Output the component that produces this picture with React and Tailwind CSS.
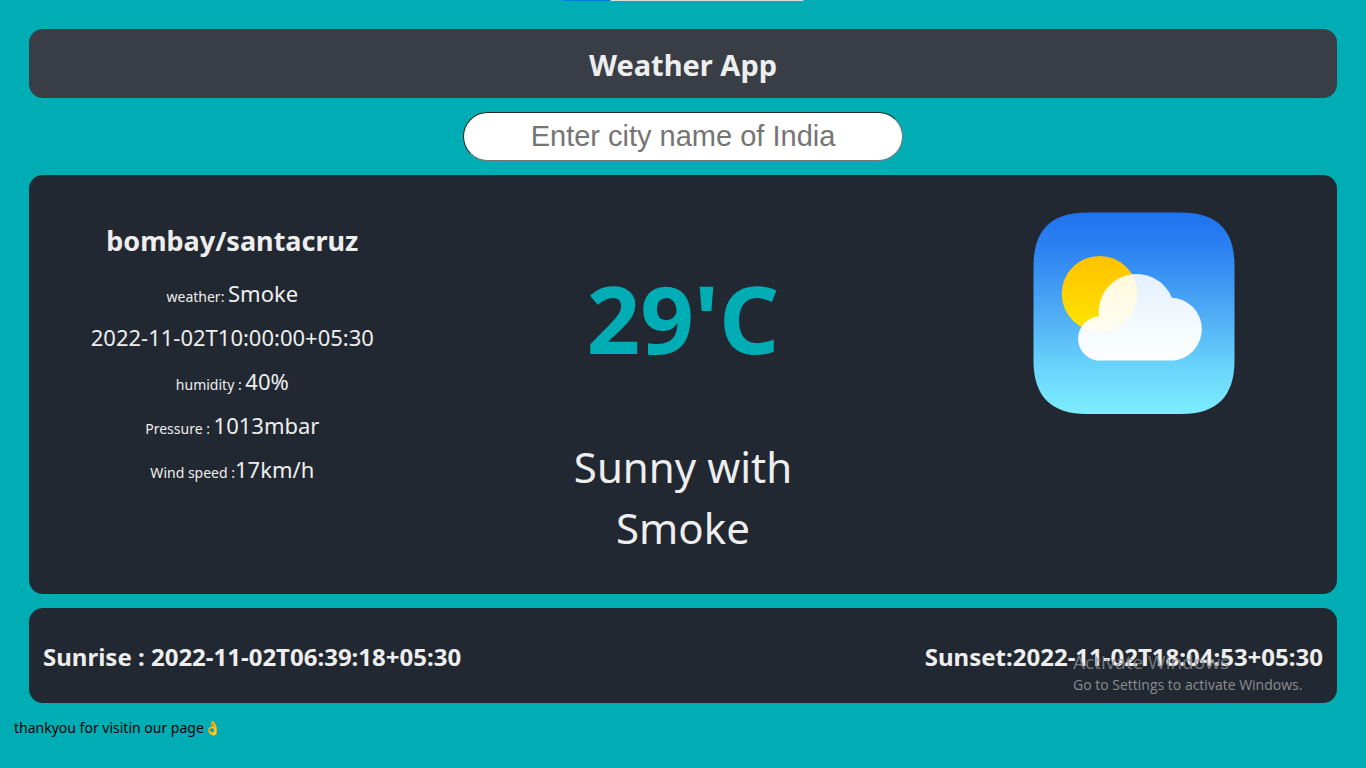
import React from "react";

const readings = [
  { label: "weather: ", value: "Smoke" },
  { label: "", value: "2022-11-02T10:00:00+05:30" },
  { label: "humidity : ", value: "40%" },
  { label: "Pressure : ", value: "1013mbar" },
  { label: "Wind speed :", value: "17km/h" },
];

function WeatherIcon() {
  return (
    <svg className="size-[202px]" viewBox="0 0 202 202" role="img" aria-label="Partly cloudy">
      <defs>
        <linearGradient id="sky" x1="0" y1="0" x2="0" y2="1">
          <stop offset="0" stopColor="#1f73ef" />
          <stop offset="0.18" stopColor="#2b82f1" />
          <stop offset="0.5" stopColor="#4facf5" />
          <stop offset="0.78" stopColor="#6ad6fb" />
          <stop offset="1" stopColor="#7deeff" />
        </linearGradient>
        <linearGradient id="sun" x1="0" y1="0" x2="0" y2="1">
          <stop offset="0" stopColor="#ffc100" />
          <stop offset="1" stopColor="#ffe600" />
        </linearGradient>
        <linearGradient id="cloud" x1="0" y1="0" x2="0" y2="1">
          <stop offset="0" stopColor="#fff" stopOpacity="0.86" />
          <stop offset="1" stopColor="#fff" stopOpacity="0.99" />
        </linearGradient>
      </defs>
      <path
        d="M0.5 54C0.5 18 18 0.5 54 0.5H148C184 0.5 201.5 18 201.5 54V148.5C201.5 184.5 184 202 148 202H54C18 202 0.5 184.5 0.5 148.5Z"
        fill="url(#sky)"
      />
      <circle cx="66.6" cy="81.8" r="37.9" fill="url(#sun)" />
      <path
        d="M67.6 148.6A22 22 0 0 1 65.1 104.6A38.1 38.1 0 0 1 138.2 85.7A31.5 31.5 0 0 1 138.6 148.6Z"
        transform="translate(0.7 0)"
        fill="url(#cloud)"
      />
    </svg>
  );
}

export default function App() {
  return (
    <div className="relative min-h-screen bg-[#00adb5] p-[14px] font-['Comic_Sans_MS','Noto_Sans',sans-serif] text-[#eeeeee]">
      <div className="absolute top-0 left-1/2 flex h-px w-[241px] -translate-x-1/2 bg-[#dddddd]">
        <div className="w-1/5 bg-[#0078d7]" />
      </div>

      <main className="flex flex-col gap-[14px] p-[15px] pb-[14px]">
        <header className="rounded-[14px] bg-[#393e46] pt-[15px] pb-[13px] text-center">
          <h1 className="text-[29px] leading-[41px] font-bold">Weather App</h1>
        </header>

        <input
          type="text"
          aria-label="City name"
          placeholder="Enter city name of India"
          className="h-[49px] w-[440px] max-w-full self-center rounded-full border border-t-[#262626] border-r-[#767676] border-b-[#767676] border-l-[#262626] bg-white text-center font-['Liberation_Sans',sans-serif] text-[29px] text-black placeholder:text-[#757575]"
        />

        <section className="grid grid-cols-3 gap-[72px] rounded-[14px] bg-[#222831] px-[14px] pt-[37px] pb-[36px] text-center">
          <div className="pt-[7px]">
            <h2 className="mb-[12px] text-[27px] leading-[44px] font-bold">bombay/santacruz</h2>
            {readings.map((r) => (
              <p key={r.value} className="text-[14px] leading-[44px]">
                {r.label}
                <span className="text-[22px] leading-none">{r.value}</span>
              </p>
            ))}
          </div>
          <div className="pt-[46px]">
            <p className="text-[94px] leading-[120px] font-bold text-[#00adb5]">29'C</p>
            <p className="mx-auto mt-[58px] max-w-[300px] text-[42px] leading-[61px]">Sunny with Smoke</p>
          </div>
          <div className="flex items-start justify-center">
            <WeatherIcon />
          </div>
        </section>

        <section className="flex justify-between rounded-[14px] bg-[#222831] px-[14px] pt-[32px] pb-[30px] text-[24px] leading-[33px] font-bold">
          <h2>Sunrise : 2022-11-02T06:39:18+05:30</h2>
          <h2>Sunset:2022-11-02T18:04:53+05:30</h2>
        </section>
      </main>

      <footer className="text-[14px] leading-[22px] text-black">thankyou for visitin our page👌</footer>

      <aside className="pointer-events-none absolute right-[57px] bottom-[73px] w-[236px] font-['Open_Sans',sans-serif] text-[#8b8d90]">
        <p className="text-[19px] leading-[26px] opacity-80">Activate Windows</p>
        <p className="text-[14px] leading-[20px]">Go to Settings to activate Windows.</p>
      </aside>
    </div>
  );
}
